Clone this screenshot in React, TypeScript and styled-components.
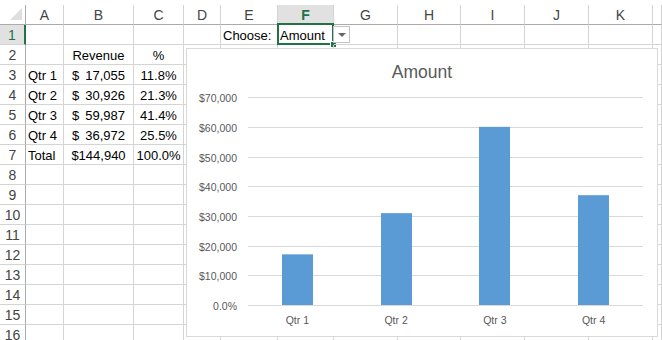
import React from "react";
import styled, { createGlobalStyle } from "styled-components";

const green = "#217346";
const gridLine = "#d4d4d4";
const headerLine = "#ababab";
const chartText = "#595959";
const barBlue = "#5b9bd5";

const GlobalStyle = createGlobalStyle`
  body {
    margin: 0;
    background: #fff;
    font-family: "Liberation Sans", Arial, sans-serif;
  }
`;

// L only peeks in at the right edge, so its letter is off screen
const columns = [
  { name: "A", width: 38 },
  { name: "B", width: 70 },
  { name: "C", width: 50 },
  { name: "D", width: 37 },
  { name: "E", width: 57 },
  { name: "F", width: 56 },
  { name: "G", width: 64 },
  { name: "H", width: 63 },
  { name: "I", width: 64 },
  { name: "J", width: 64 },
  { name: "K", width: 64 },
  { name: "L", width: 9, hidden: true },
];

type Align = "left" | "center" | "acct";
type CellData = { text: string; align?: Align; amount?: string };

const cells: Record<string, CellData> = {
  E1: { text: "Choose:" },
  F1: { text: "Amount" },
  B2: { text: "Revenue", align: "center" },
  C2: { text: "%", align: "center" },
  A3: { text: "Qtr 1" },
  B3: { text: "$", amount: "17,055", align: "acct" },
  C3: { text: "11.8%", align: "center" },
  A4: { text: "Qtr 2" },
  B4: { text: "$", amount: "30,926", align: "acct" },
  C4: { text: "21.3%", align: "center" },
  A5: { text: "Qtr 3" },
  B5: { text: "$", amount: "59,987", align: "acct" },
  C5: { text: "41.4%", align: "center" },
  A6: { text: "Qtr 4" },
  B6: { text: "$", amount: "36,972", align: "acct" },
  C6: { text: "25.5%", align: "center" },
  A7: { text: "Total" },
  B7: { text: "$144,940", align: "center" },
  C7: { text: "100.0%", align: "center" },
};

const revenue = [
  { label: "Qtr 1", value: 17055 },
  { label: "Qtr 2", value: 30926 },
  { label: "Qtr 3", value: 59987 },
  { label: "Qtr 4", value: 36972 },
];

const Sheet = styled.div`
  position: relative;
  width: 662px;
  height: 340px;
  overflow: hidden;
  background: #fff;
`;

const Grid = styled.div`
  display: grid;
  grid-template-columns: 26px ${columns.map((c) => c.width + "px").join(" ")};
  grid-template-rows: 25px repeat(16, 20px);

  & > * {
    box-sizing: border-box;
  }
`;

const Corner = styled.div`
  position: relative;
  margin-top: 5px;
  border-right: 1px solid ${headerLine};
  border-bottom: 1px solid ${headerLine};

  &::after {
    content: "";
    position: absolute;
    right: 3px;
    bottom: 4px;
    width: 0;
    height: 0;
    border-left: 12px solid transparent;
    border-bottom: 12px solid #dfdfdf;
  }
`;

const ColHeader = styled.div<{ $selected?: boolean }>`
  margin-top: 5px;
  display: flex;
  align-items: center;
  justify-content: center;
  font-size: 14px;
  color: ${(p) => (p.$selected ? green : "#444")};
  font-weight: ${(p) => (p.$selected ? "bold" : "normal")};
  background: ${(p) => (p.$selected ? "#e1e1e1" : "#fff")};
  border-right: 1px solid ${gridLine};
  border-bottom: 1px solid ${headerLine};
`;

const RowHeader = styled.div<{ $selected?: boolean }>`
  display: flex;
  align-items: center;
  justify-content: center;
  font-size: 14px;
  color: ${(p) => (p.$selected ? green : "#444")};
  background: ${(p) => (p.$selected ? "#e1e1e1" : "#fff")};
  border-right: ${(p) => (p.$selected ? `2px solid ${green}` : `1px solid ${headerLine}`)};
  border-bottom: 1px solid ${gridLine};
`;

const Cell = styled.div<{ $align?: Align }>`
  position: relative;
  display: flex;
  align-items: center;
  justify-content: ${(p) =>
    p.$align === "center" ? "center" : p.$align === "acct" ? "space-between" : "flex-start"};
  padding: ${(p) => (p.$align === "acct" ? "1px 8px 0 8px" : "1px 2px 0")};
  font-size: 13px;
  color: #000;
  white-space: nowrap;
  border-right: 1px solid ${gridLine};
  border-bottom: 1px solid ${gridLine};
`;

const SelectionBox = styled.div`
  position: absolute;
  left: -1px;
  top: -2px;
  right: -1px;
  bottom: -1px;
  border: 2px solid ${green};
  pointer-events: none;
`;

const FillHandle = styled.div`
  position: absolute;
  right: -4px;
  bottom: -4px;
  width: 6px;
  height: 6px;
  background: ${green};
  border-left: 1px solid #fff;
  border-top: 1px solid #fff;
  box-sizing: border-box;
`;

const DropButton = styled.div`
  position: absolute;
  left: 100%;
  top: 1px;
  width: 17px;
  height: 17px;
  box-sizing: border-box;
  border: 1px solid #c3c3c3;
  background: #fff;
  display: flex;
  align-items: center;
  justify-content: center;
  z-index: 1;

  &::after {
    content: "";
    width: 0;
    height: 0;
    border-left: 4px solid transparent;
    border-right: 4px solid transparent;
    border-top: 4px solid #666;
  }
`;

const Chart = styled.div`
  position: absolute;
  left: 186px;
  top: 48px;
  width: 472px;
  height: 289px;
  box-sizing: border-box;
  border: 1px solid #d9d9d9;
  background: #fff;
  z-index: 2;
`;

const ChartTitle = styled.div`
  padding-top: 13px;
  height: 20px;
  line-height: 20px;
  text-align: center;
  font-size: 17.5px;
  color: ${chartText};
`;

const Plot = styled.svg`
  display: block;
  font-family: "Liberation Sans", Arial, sans-serif;
  font-size: 10.5px;
`;

const ColumnChart = () => {
  // svg starts at page y = 82, x = 187
  const baseY = 305 - 82;
  const step = 29.7;
  const plotLeft = 61;
  const plotRight = 456;
  const catW = (plotRight - plotLeft) / revenue.length;
  const barW = 31;
  const ticks = [0, 1, 2, 3, 4, 5, 6, 7];

  return (
    <Plot width={470} height={253}>
      {ticks.map((k) => {
        const y = Math.round(baseY - k * step) + 0.5;
        const label = k === 0 ? "0.0%" : `$${k}0,000`;
        return (
          <g key={k}>
            <line x1={plotLeft} x2={plotRight} y1={y} y2={y} stroke="#d9d9d9" strokeWidth={1} />
            <text x={50} y={y + 4} textAnchor="end" fill={chartText}>
              {label}
            </text>
          </g>
        );
      })}
      {revenue.map((r, i) => {
        const cx = plotLeft + catW * (i + 0.5);
        const h = (r.value * step) / 10000;
        return (
          <g key={r.label}>
            <rect x={Math.round(cx - barW / 2)} y={baseY - h} width={barW} height={h} fill={barBlue} />
            <text x={cx} y={242} textAnchor="middle" fill={chartText}>
              {r.label}
            </text>
          </g>
        );
      })}
    </Plot>
  );
};

export default function App() {
  const rows = Array.from({ length: 16 }, (_, i) => i + 1);
  return (
    <Sheet>
      <GlobalStyle />
      <Grid>
        <Corner />
        {columns.map((c) => (
          <ColHeader key={c.name} $selected={c.name === "F"}>
            {c.hidden ? null : c.name}
          </ColHeader>
        ))}
        {rows.map((r) => (
          <React.Fragment key={r}>
            <RowHeader $selected={r === 1}>{r}</RowHeader>
            {columns.map((c) => {
              const id = `${c.name}${r}`;
              const d = cells[id];
              return (
                <Cell key={id} $align={d?.align}>
                  {d && d.align === "acct" ? (
                    <>
                      <span>{d.text}</span>
                      <span>{d.amount}</span>
                    </>
                  ) : (
                    d?.text
                  )}
                  {id === "F1" && (
                    <>
                      <SelectionBox>
                        <FillHandle />
                      </SelectionBox>
                      <DropButton />
                    </>
                  )}
                </Cell>
              );
            })}
          </React.Fragment>
        ))}
      </Grid>
      <Chart>
        <ChartTitle>Amount</ChartTitle>
        <ColumnChart />
      </Chart>
    </Sheet>
  );
}
